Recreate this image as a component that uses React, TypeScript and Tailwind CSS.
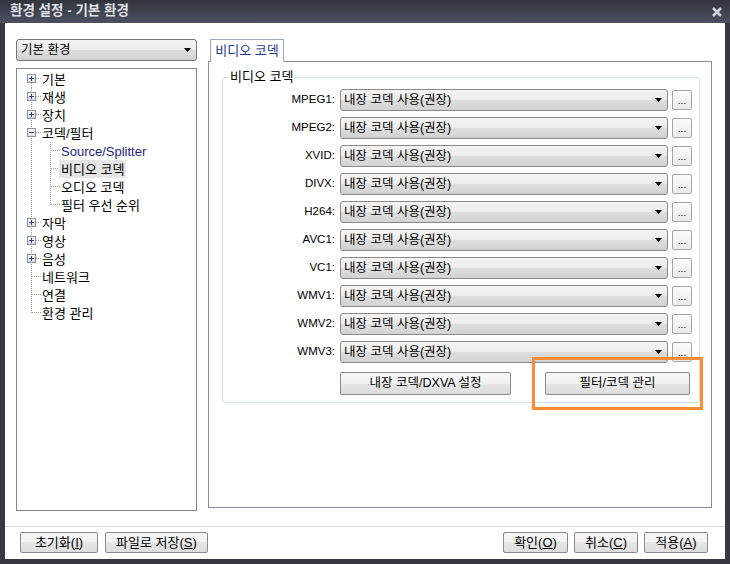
import React from 'react';

const FONT = '"Liberation Sans", "Noto Sans CJK KR", sans-serif';

type TreeItem = {
    label: string;
    level: 0 | 1;
    exp?: '+' | '-';
    first?: boolean;
    last?: boolean;
    lastChild?: boolean;
    selected?: boolean;
    blue?: boolean;
};

const tree: TreeItem[] = [
    { label: '기본', level: 0, exp: '+', first: true },
    { label: '재생', level: 0, exp: '+' },
    { label: '장치', level: 0, exp: '+' },
    { label: '코덱/필터', level: 0, exp: '-' },
    { label: 'Source/Splitter', level: 1, blue: true },
    { label: '비디오 코덱', level: 1, selected: true },
    { label: '오디오 코덱', level: 1 },
    { label: '필터 우선 순위', level: 1, lastChild: true },
    { label: '자막', level: 0, exp: '+' },
    { label: '영상', level: 0, exp: '+' },
    { label: '음성', level: 0, exp: '+' },
    { label: '네트워크', level: 0 },
    { label: '연결', level: 0 },
    { label: '환경 관리', level: 0, last: true },
];

const codecs = ['MPEG1', 'MPEG2', 'XVID', 'DIVX', 'H264', 'AVC1', 'VC1', 'WMV1', 'WMV2', 'WMV3'];

function Arrow() {
    return (
        <svg width="7" height="4" viewBox="0 0 7 4">
            <polygon points="0,0 7,0 3.5,4" fill="#000" />
        </svg>
    );
}

// dotted tree lines + expander box
function Gutter({ item }: { item: TreeItem }) {
    const w = item.level === 0 ? 25 : 44;
    const dot = { stroke: '#a0a0a0', strokeWidth: 1, strokeDasharray: '1 1', shapeRendering: 'crispEdges' as const };
    const rootTop = item.first ? 9 : 0;
    const rootBottom = item.last ? 9 : 18;
    return (
        <svg width={w} height="18" viewBox={`0 0 ${w} 18`} className="shrink-0">
            <line x1="14.5" y1={rootTop} x2="14.5" y2={rootBottom} {...dot} />
            {item.level === 0 && <line x1="15" y1="8.5" x2="24" y2="8.5" {...dot} />}
            {item.level === 1 && (
                <>
                    <line x1="33.5" y1="0" x2="33.5" y2={item.lastChild ? 9 : 18} {...dot} />
                    <line x1="34" y1="8.5" x2="43" y2="8.5" {...dot} />
                </>
            )}
            {item.exp && (
                <g shapeRendering="crispEdges">
                    <defs>
                        <linearGradient id="bx" x1="0" y1="0" x2="0" y2="1">
                            <stop offset="0" stopColor="#ffffff" />
                            <stop offset="1" stopColor="#dcdcdc" />
                        </linearGradient>
                    </defs>
                    <rect x="10.5" y="4.5" width="8" height="8" fill="url(#bx)" stroke="#8e8f94" />
                    <line x1="12" y1="8.5" x2="17" y2="8.5" stroke="#1e3f8f" />
                    {item.exp === '+' && <line x1="14.5" y1="6" x2="14.5" y2="11" stroke="#1e3f8f" />}
                </g>
            )}
        </svg>
    );
}

function Btn({ children, className = '' }: { children: React.ReactNode; className?: string }) {
    return (
        <div
            className={`flex items-center justify-center rounded-[2px] border border-[#8a8a8a] bg-[linear-gradient(#f7f7f7_0%,#f1f1f1_50%,#e6e6e6_50%,#dddddd_100%)] text-black ${className}`}
        >
            {children}
        </div>
    );
}

function Combo({ text, className = '' }: { text: string; className?: string }) {
    return (
        <div
            className={`flex h-[22px] shrink-0 items-center justify-between rounded-[3px] border border-[#8a8a8a] bg-[linear-gradient(#f3f3f3_0%,#ececec_50%,#dedede_50%,#d2d2d2_100%)] pl-[3px] pr-[5px] ${className}`}
        >
            <span className="text-[12.5px] leading-none text-black">{text}</span>
            <Arrow />
        </div>
    );
}

export default function App() {
    return (
        <div className="flex h-[564px] w-[730px] flex-col bg-[#363842]" style={{ fontFamily: FONT }}>
            {/* title bar */}
            <div className="flex h-[23px] shrink-0 items-center justify-between bg-[linear-gradient(#32343c,#4d5062)] pl-[10px] pr-[8px]">
                <span className="text-[13.5px] font-bold text-[#dfe0e6]">환경 설정 - 기본 환경</span>
                <svg width="10" height="10" viewBox="0 0 10 10">
                    <path d="M1 1 L9 9 M9 1 L1 9" stroke="#cfd1d8" strokeWidth="2.6" />
                </svg>
            </div>

            {/* body */}
            <div className="mx-[5px] mb-[5px] flex flex-1 flex-col bg-white">
                <div className="flex gap-[11px] pl-[11px] pr-[13px] pt-[16px]">
                    {/* left column */}
                    <div className="flex w-[181px] shrink-0 flex-col gap-[7px]">
                        <Combo text="기본 환경" className="border-[#767676] pl-[4px]" />
                        <div className="h-[443px] border border-[#828790] bg-white pt-[1px]">
                            {tree.map((item) => (
                                <div key={item.label} className="flex h-[18px] items-center">
                                    <Gutter item={item} />
                                    <span
                                        className={`-ml-[2px] flex h-[18px] items-center px-[2px] text-[13px] leading-none ${item.selected ? 'bg-[#e5e5e5]' : ''} ${item.blue ? 'text-[12.5px] text-[#1c2680]' : 'text-black'}`}
                                    >
                                        {item.label}
                                    </span>
                                </div>
                            ))}
                        </div>
                    </div>

                    {/* right column */}
                    <div className="flex w-[504px] shrink-0 flex-col">
                        <div className="relative z-10 -mb-px ml-[2px] flex h-[23px] w-[74px] items-center justify-center border-x border-t border-[#9ba7c0] bg-white text-[13px] text-[#1d3890]">
                            비디오 코덱
                        </div>
                        <div className="h-[447px] border border-[#898c95] bg-white pl-[13px] pr-[11px] pt-[8px]">
                            <fieldset className="w-[478px] rounded-[3px] border border-[#d5dfe5] pb-[7px] pl-0 pr-[7px]">
                                <legend className="ml-[6px] px-[1px] text-[13px] leading-[14px] text-black">비디오 코덱</legend>
                                <div className="mt-[5px] flex flex-col gap-[6px]">
                                    {codecs.map((c) => (
                                        <div key={c} className="flex items-center">
                                            <span className="w-[117px] shrink-0 pr-[5px] text-right text-[11.5px] text-black">{c}:</span>
                                            <Combo text="내장 코덱 사용(권장)" className="w-[328px]" />
                                            <div className="ml-[4px] flex h-[20px] w-[20px] shrink-0 items-end justify-center rounded-[2px] border border-[#a5a5a5] bg-[linear-gradient(#fbfbfb,#ececec)] pb-[3px] text-[10px] leading-none text-black">
                                                ...
                                            </div>
                                        </div>
                                    ))}
                                    <div className="mt-[3px] flex gap-[34px] pl-[117px]">
                                        <Btn className="h-[23px] w-[171px] text-[12.5px]">내장 코덱/DXVA 설정</Btn>
                                        <Btn className="h-[23px] w-[145px] text-[12.5px]">필터/코덱 관리</Btn>
                                    </div>
                                </div>
                            </fieldset>
                        </div>
                    </div>
                </div>

                <div className="mt-[15px] border-t border-[#d9d9d9]" />
                <div className="flex items-center justify-between pl-[15px] pr-[17px] pt-[5px]">
                    <div className="flex gap-[7px]">
                        <Btn className="h-[21px] w-[78px] text-[13px]">
                            초기화(<u>I</u>)
                        </Btn>
                        <Btn className="h-[21px] w-[103px] text-[13px]">
                            파일로 저장(<u>S</u>)
                        </Btn>
                    </div>
                    <div className="flex gap-[6px]">
                        <Btn className="h-[21px] w-[65px] text-[13px]">
                            확인(<u>O</u>)
                        </Btn>
                        <Btn className="h-[21px] w-[64px] text-[13px]">
                            취소(<u>C</u>)
                        </Btn>
                        <Btn className="h-[21px] w-[64px] text-[13px]">
                            적용(<u>A</u>)
                        </Btn>
                    </div>
                </div>
            </div>

            {/* highlight marker over the filter button */}
            <div className="pointer-events-none absolute left-[532px] top-[357px] h-[53px] w-[171px] border-[3px] border-[#ff8c34]" />
        </div>
    );
}
